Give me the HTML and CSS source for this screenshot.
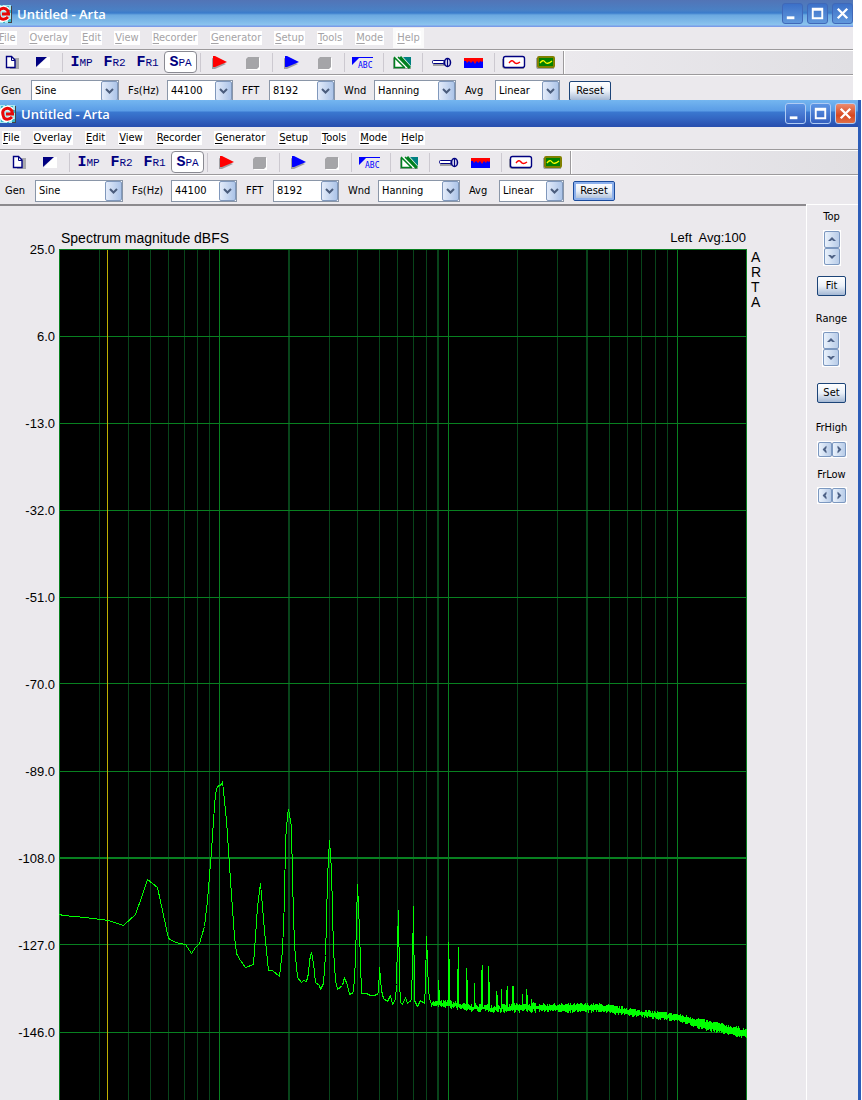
FILE: index.html
```html
<!DOCTYPE html>
<html lang="en">
<head>
<meta charset="utf-8">
<title>Untitled - Arta</title>
<link rel="stylesheet" href="styles.css">
</head>
<body>
<svg class="defs" aria-hidden="true">
  <symbol id="app" viewBox="0 0 16 18"><path fill="#a8e8f0" d="M0 0h15v18H0z"/><path fill="#38b8c8" d="M1 1h2v2H1zM5 0h2v2H5zM10 1h3v2h-3zM13 5h2v3h-2zM12 14h3v3h-3zM1 15h3v2H1zM7 15h2v3H7z"/><path fill="#444" d="M15 1h1v17h-1zM12 17h4v1h-4z"/><path fill="none" stroke="#fff" stroke-width="5" d="M12 5Q7 1 3 5T4 14Q8 16 12 12"/><path fill="none" stroke="#e80808" stroke-width="3" d="M12 6Q9 2 5 4T4 13Q8 16 12 12M6 9h8M12 5v4"/></symbol>
  <symbol id="new" viewBox="0 0 33 23"><path fill="#a8a8ac" d="M17 7h9v11h-9z"/><path fill="#fff" stroke="#000080" stroke-width="1.4" d="M13.500 5.500h5l3.500 3.500v7.500h-8.500z"/><path fill="none" stroke="#000080" d="M18.500 5.500v4h3.500"/></symbol>
  <symbol id="invert" viewBox="0 0 33 23"><path fill="#fff" d="M20 6h4v11H11z"/><path fill="#000080" d="M10 6h11L10 16z"/></symbol>
  <symbol id="play" viewBox="0 0 33 23"><path fill="#a0a0a4" d="M9 7v11h3l11-5z"/><path fill="currentColor" d="M10 5v11h2l12-5-12-6z"/></symbol>
  <symbol id="stop" viewBox="0 0 33 23"><path fill="#fff" d="M13 7h11v12H11z"/><path fill="#a5a5a8" d="M12 6h11v10l-2 2H10V8z"/></symbol>
  <symbol id="hatch" viewBox="0 0 33 23"><path fill="#a0a0a4" d="M7 7h2v9h16v2H7z"/><path fill="#fff" d="M8 6h17v11H8z"/><path fill="none" stroke="#008020" stroke-width="1.500" d="M8.500 6v10.500H19M8 6l11 11M12 6l11 11"/><path fill="#008080" d="M17 6h8v9z"/><path stroke="#008020" stroke-width="3" d="m14 6 10 11"/></symbol>
  <symbol id="key" viewBox="0 0 33 23"><path fill="#a0a0a4" d="M8 13h13v2H8z"/><rect x="7.500" y="9.500" width="12" height="3" rx="1" fill="#fff" stroke="#000080"/><ellipse cx="22.500" cy="11.500" rx="3" ry="4" fill="#d0d0e8" stroke="#000080" stroke-width="1.500"/><path stroke="#000080" d="M22.500 7v9M19 9v5"/></symbol>
  <symbol id="wave" viewBox="0 0 33 23"><path fill="red" d="M6 7h19v6H6z"/><path fill="#00f" d="M6 10l2 0 1 2 2-2 2 2 2-2 2 3 2-3 2 2 1-2 2 1 1-1v7H6z"/></symbol>
  <symbol id="sine" viewBox="0 0 33 23"><path fill="#a0a0a4" d="M5 8h2v8h20v2H7l-2-2z"/><rect x="6.500" y="5.500" width="21" height="11" rx="2" fill="#fff" stroke="#000080" stroke-width="1.400"/><path fill="none" stroke="red" stroke-width="1.400" d="M12 12q3-4 5-1t6 0"/></symbol>
  <symbol id="scope" viewBox="0 0 33 23"><path fill="#a0a0a4" d="M6 7h2v9h16v2H7l-1-2z"/><rect x="8" y="6" width="16" height="10" rx="1" fill="#008000" stroke="#808000" stroke-width="2"/><path fill="none" stroke="#ff0" stroke-width="1.300" d="M10 12q3-4 5-1t7-1"/></symbol>
  <symbol id="drop" viewBox="0 0 9 7"><path fill="none" stroke="#4a5c7c" stroke-width="2" d="m1 1.500 3.500 3.500L8 1.500"/></symbol>
  <symbol id="up" viewBox="0 0 8 5"><path fill="#4d6185" d="M4 0l4 4H5.500L4 3 2.500 4H0z"/></symbol>
  <symbol id="min" viewBox="0 0 20 20"><path fill="#fff" d="M4 13h8v3H4z"/></symbol>
  <symbol id="max" viewBox="0 0 20 20"><path fill="#fff" fill-rule="evenodd" d="M4 4h12v12H4zM6 7v7h8V7z"/></symbol>
  <symbol id="close" viewBox="0 0 20 20"><path stroke="#fff" stroke-width="2.500" d="m5 5 10 10M15 5 5 15"/></symbol>
</svg>

<section class="window back" aria-label="Background window">
  <header class="titlebar"><svg class="app-icon"><use href="#app"/></svg><h1 class="title">Untitled - Arta</h1>
    <button class="caption" aria-label="Minimize"><svg><use href="#min"/></svg></button><button class="caption" aria-label="Maximize"><svg><use href="#max"/></svg></button><button class="caption" aria-label="Close"><svg><use href="#close"/></svg></button></header>
  <nav class="menu"><button><u>F</u>ile</button><button><u>O</u>verlay</button><button><u>E</u>dit</button><button><u>V</u>iew</button><button><u>R</u>ecorder</button><button><u>G</u>enerator</button><button><u>S</u>etup</button><button><u>T</u>ools</button><button><u>M</u>ode</button><button class="lit"><u>H</u>elp</button></nav>
  <div class="toolbar">
    <div class="tools">
      <button aria-label="New"><svg><use href="#new"/></svg></button><button aria-label="Invert"><svg><use href="#invert"/></svg></button><i class="sep"></i>
      <button class="mode">I<small>MP</small></button><button class="mode">F<small>R2</small></button><button class="mode">F<small>R1</small></button><button class="mode active">S<small>PA</small></button><i class="sep"></i>
      <button class="red" aria-label="Record"><svg><use href="#play"/></svg></button><button aria-label="Stop recording"><svg><use href="#stop"/></svg></button><i class="sep"></i>
      <button class="blue" aria-label="Generate"><svg><use href="#play"/></svg></button><button aria-label="Stop generator"><svg><use href="#stop"/></svg></button><i class="sep"></i>
      <button aria-label="Labels"><svg viewBox="0 0 33 23"><path fill="#00f" d="M5 6h21v1H12L5 14z"/><text x="11" y="17" class="abc-text">ABC</text></svg></button><i class="sep"></i>
      <button aria-label="Colors"><svg><use href="#hatch"/></svg></button><i class="sep"></i>
      <button aria-label="Calibrate"><svg><use href="#key"/></svg></button><button aria-label="Spectrum"><svg><use href="#wave"/></svg></button><i class="sep"></i>
      <button aria-label="Signal"><svg><use href="#sine"/></svg></button><button aria-label="Scope"><svg><use href="#scope"/></svg></button>
    </div><div class="rest"></div>
  </div>
  <div class="options">
    <label for="b-gen">Gen</label><span class="combo"><select id="b-gen"><option>Sine</option></select><svg><use href="#drop"/></svg></span>
    <label for="b-fs">Fs(Hz)</label><span class="combo"><select id="b-fs"><option>44100</option></select><svg><use href="#drop"/></svg></span>
    <label for="b-fft">FFT</label><span class="combo"><select id="b-fft"><option>8192</option></select><svg><use href="#drop"/></svg></span>
    <label for="b-wnd">Wnd</label><span class="combo"><select id="b-wnd"><option>Hanning</option></select><svg><use href="#drop"/></svg></span>
    <label for="b-avg">Avg</label><span class="combo"><select id="b-avg"><option>Linear</option></select><svg><use href="#drop"/></svg></span>
    <button class="push">Reset</button>
  </div>
</section>

<main class="window front">
  <header class="titlebar"><svg class="app-icon"><use href="#app"/></svg><h1 class="title">Untitled - Arta</h1>
    <button class="caption" aria-label="Minimize"><svg><use href="#min"/></svg></button><button class="caption" aria-label="Maximize"><svg><use href="#max"/></svg></button><button class="caption exit" aria-label="Close"><svg><use href="#close"/></svg></button></header>
  <nav class="menu"><button><u>F</u>ile</button><button><u>O</u>verlay</button><button><u>E</u>dit</button><button><u>V</u>iew</button><button><u>R</u>ecorder</button><button><u>G</u>enerator</button><button><u>S</u>etup</button><button><u>T</u>ools</button><button><u>M</u>ode</button><button><u>H</u>elp</button></nav>
  <div class="toolbar">
    <div class="tools">
      <button aria-label="New"><svg><use href="#new"/></svg></button><button aria-label="Invert"><svg><use href="#invert"/></svg></button><i class="sep"></i>
      <button class="mode">I<small>MP</small></button><button class="mode">F<small>R2</small></button><button class="mode">F<small>R1</small></button><button class="mode active">S<small>PA</small></button><i class="sep"></i>
      <button class="red" aria-label="Record"><svg><use href="#play"/></svg></button><button aria-label="Stop recording"><svg><use href="#stop"/></svg></button><i class="sep"></i>
      <button class="blue" aria-label="Generate"><svg><use href="#play"/></svg></button><button aria-label="Stop generator"><svg><use href="#stop"/></svg></button><i class="sep"></i>
      <button aria-label="Labels"><svg viewBox="0 0 33 23"><path fill="#00f" d="M5 6h21v1H12L5 14z"/><text x="11" y="17" class="abc-text">ABC</text></svg></button><i class="sep"></i>
      <button aria-label="Colors"><svg><use href="#hatch"/></svg></button><i class="sep"></i>
      <button aria-label="Calibrate"><svg><use href="#key"/></svg></button><button aria-label="Spectrum"><svg><use href="#wave"/></svg></button><i class="sep"></i>
      <button aria-label="Signal"><svg><use href="#sine"/></svg></button><button aria-label="Scope"><svg><use href="#scope"/></svg></button>
    </div><div class="rest"></div>
  </div>
  <div class="options">
    <label for="gen">Gen</label><span class="combo"><select id="gen"><option>Sine</option></select><svg><use href="#drop"/></svg></span>
    <label for="fs">Fs(Hz)</label><span class="combo"><select id="fs"><option>44100</option></select><svg><use href="#drop"/></svg></span>
    <label for="fft">FFT</label><span class="combo"><select id="fft"><option>8192</option></select><svg><use href="#drop"/></svg></span>
    <label for="wnd">Wnd</label><span class="combo"><select id="wnd"><option>Hanning</option></select><svg><use href="#drop"/></svg></span>
    <label for="avg">Avg</label><span class="combo"><select id="avg"><option>Linear</option></select><svg><use href="#drop"/></svg></span>
    <button class="push focus">Reset</button>
  </div>
  <div class="workspace">
    <section class="graph">
      <div class="heading"><span>Spectrum magnitude dBFS</span><span class="status">Left&nbsp; Avg:100</span></div>
      <div class="axis"><span>25.0</span><span>6.0</span><span>-13.0</span><span>-32.0</span><span>-51.0</span><span>-70.0</span><span>-89.0</span><span>-108.0</span><span>-127.0</span><span>-146.0</span></div>
      <svg class="plot" viewBox="59 249 688 851" preserveAspectRatio="none" role="img" aria-label="Spectrum magnitude">
        <path class="dim" d="M99.500 249v851M128.500 249v851M150.500 249v851M168.500 249v851M184.500 249v851M197.500 249v851M209.500 249v851M329.500 249v851M357.500 249v851M379.500 249v851M397.500 249v851M413.500 249v851M426.500 249v851M517.500 249v851M557.500 249v851M609.500 249v851M627.500 249v851M641.500 249v851M655.500 249v851M667.500 249v851"/>
        <path class="dim thick" d="M289 249v851M438 249v851M587 249v851"/>
        <path class="grid" d="M59.500 249v851M219.500 249v851M448.500 249v851M677.500 249v851M746.500 249v851M59 249.500h688M59 336.500h688M59 423.500h688M59 510.500h688M59 597.500h688M59 683.500h688M59 771.500h688M59 944.500h688M59 1032.500h688"/>
        <path class="grid thick" d="M59 858h688"/>
        <path class="cursor" d="M107.500 250v850"/>
        <path class="trace" id="trace"/>
      </svg>
      <div class="brand"><span>A</span><span>R</span><span>T</span><span>A</span></div>
    </section>
    <aside class="side">
      <div class="control"><span>Top</span><div class="spin"><button aria-label="Top up"><svg><use href="#up"/></svg></button><button aria-label="Top down"><svg class="down"><use href="#up"/></svg></button></div></div>
      <button class="push">Fit</button>
      <div class="control range"><span>Range</span><div class="spin"><button aria-label="Range up"><svg><use href="#up"/></svg></button><button aria-label="Range down"><svg class="down"><use href="#up"/></svg></button></div></div>
      <button class="push">Set</button>
      <div class="control freq"><span>FrHigh</span><div class="spin flat"><button aria-label="High left"><svg class="left"><use href="#up"/></svg></button><button aria-label="High right"><svg class="right"><use href="#up"/></svg></button></div></div>
      <div class="control low"><span>FrLow</span><div class="spin flat"><button aria-label="Low left"><svg class="left"><use href="#up"/></svg></button><button aria-label="Low right"><svg class="right"><use href="#up"/></svg></button></div></div>
    </aside>
  </div>
</main>
<script src="script.js"></script>
</body>
</html>
```
FILE: styles.css
```css
* { box-sizing: border-box; }
body { margin: 0; background: #fff; font: 11px/14px "DejaVu Sans Condensed", "DejaVu Sans", sans-serif; color: #000; overflow-x: hidden; }
button { margin: 0; padding: 0; border: 0; background: none; color: inherit; font: inherit; }
.defs { position: absolute; width: 0; height: 0; }
.window { background: #ebe9ed; overflow: hidden; }
.back { height: 100px; margin-right: 9px; }
.front { margin-right: 1px; border-right: 3px solid #2c5cb8; }

.titlebar { display: flex; align-items: center; gap: 4px; height: 27px; padding-right: 2px; }
.front .titlebar { background: linear-gradient(#74b6f0 0, #5a9ce6 11px, #3a78d0 12px, #3468c4 18px, #2850b0 26px); }
.back .titlebar { padding-right: 0; background: linear-gradient(#5274b6 0, #4a80c4 10px, #3a7ccc 13px, #6aa8e0 15px, #8cc4ee 25px, #7a9ce8 26px); }
.app-icon { width: 16px; height: 18px; }
.back .app-icon { margin-left: -4px; }
.title { flex: 1; margin: 0; padding-left: 1px; color: #fff; font: 600 13px/18px "Open Sans", sans-serif; }
.caption { width: 21px; height: 21px; padding: 0; border: 1px solid #b0ccf4; border-radius: 3px; background: linear-gradient(#5c94e4, #3460c0); }
.back .caption { border-color: #4068b8; background: linear-gradient(#3c70c8, #6098dc); }
.front .exit { background: linear-gradient(#ec8c70, #d84820 60%, #e07048); }
.caption svg { display: block; width: 19px; height: 19px; }

.menu { display: flex; align-items: center; gap: 12px; height: 22px; padding-left: 2px; }
.menu button { padding: 0 1px; background: #fff; line-height: 14px; }
.back .menu { margin-left: -4px; color: #a5a3a6; }
.back .menu .lit { outline: 3px solid #fafafa; }
.menu u { text-underline-offset: 2px; }

.toolbar { display: flex; border-top: 1px solid #9c9a9c; box-shadow: inset 0 1px #fff; padding-top: 1px; }
.back .toolbar { margin-left: -7px; }
.tools { display: flex; height: 23px; border-right: 1px solid #9c9a9c; }
.tools button { width: 33px; height: 23px; }
.tools svg { display: block; width: 33px; height: 23px; }
.rest { flex: 1; border-left: 1px solid #fff; background: linear-gradient(90deg, #ebe9ed, #e0dfe3); }
.sep { width: 3px; margin: 2px 0 2px 3px; border-left: 1px solid #ccc9d0; }
.tools .mode { color: #000080; font: bold 15px/21px "Liberation Mono", monospace; white-space: nowrap; }
.mode small { font: 11px/21px "Liberation Mono", monospace; }
.tools .active { height: 22px; border: 1px solid #8a8a92; border-radius: 4px; background: #fff; }
.red { color: red; }
.blue { color: #00f; }
.abc-text { fill: #00f; font: 8px "DejaVu Sans Mono", monospace; }

.options { display: grid; grid-template-columns: 30px 88px 48px 66px 36px 66px 39px 82px 39px 65px 51px; align-items: center; height: 30px; padding: 3px 0 0 5px; border-top: 1px solid #9c9a9c; box-shadow: inset 0 1px #fff; }
.back .options { margin-left: -4px; }
.options label { padding-left: 9px; }
.options label:first-child { padding-left: 0; }
.options .push { margin-left: 9px; width: 42px; }
.combo { position: relative; height: 22px; border: 1px solid #8a96a8; background: #fff; }
.combo select { width: 100%; height: 20px; padding: 0 20px 0 3px; border: 0; background: none; color: #000; font: inherit; appearance: none; }
.combo svg { position: absolute; top: 0; right: 0; width: 17px; height: 20px; padding: 5px 3px; border: 1px solid #8098bc; border-radius: 2px; background: linear-gradient(90deg, #e4ecfa, #acc4e8); pointer-events: none; }
.push { height: 20px; border: 1px solid #1c4478; border-radius: 2px; background: linear-gradient(#fff, #eaf0f8 50%, #a4b8d4); line-height: 16px; }
.push.focus { border-color: #1c4c9c; box-shadow: inset 0 0 0 2px #8cb0ec; }

.workspace { display: flex; min-height: 896px; }
.graph { flex: 1; display: grid; grid-template: 43px 851px / 59px 1fr 59px; border-top: 2px solid #8c8a8e; font-family: "Liberation Sans", sans-serif; }
.heading { grid-column: 2; display: flex; justify-content: space-between; align-items: flex-end; padding: 0 1px 3px 2px; font-size: 14px; line-height: 16px; }
.status { font-size: 13px; }
.axis { grid-column: 1; display: grid; grid-auto-rows: 87px; text-align: right; padding-right: 4px; font-size: 13px; line-height: 14px; overflow: visible; height: 851px; }
.axis span { margin-top: -6px; }
.plot { width: 100%; height: 851px; background: #000; shape-rendering: crispEdges; }
.plot path { fill: none; vector-effect: non-scaling-stroke; }
.dim { stroke: #08441a; }
.grid { stroke: #088020; }
.thick { stroke-width: 2; }
.cursor { stroke: #c0b000; }
.trace { stroke: #0f0; stroke-linejoin: bevel; }
.brand { display: flex; flex-direction: column; padding: 1px 0 0 4px; font-size: 14px; line-height: 15px; }

.side { width: 52px; display: flex; flex-direction: column; align-items: center; border-left: 1px solid #fff; border-top: 1px solid #fff; padding: 5px 2px 0 0; }
.side .push { width: 29px; }
.control { display: flex; flex-direction: column; align-items: center; gap: 6px; height: 66px; }
.range { margin-top: 16px; height: 71px; gap: 5px; }
.freq { margin-top: 18px; height: 47px; }
.low { gap: 5px; }
.spin { display: flex; flex-direction: column; border: 1px solid #fff; }
.spin button { display: grid; place-items: center; width: 16px; height: 17px; border: 1px solid #7c98c0; border-radius: 2px; background: linear-gradient(90deg, #eaf2fc, #b8cce8); }
.spin svg { width: 8px; height: 5px; }
.flat { flex-direction: row; }
.flat button { width: 14px; height: 15px; }
.down { transform: rotate(180deg); }
.left { transform: rotate(-90deg); }
.right { transform: rotate(90deg); }
```
FILE: script.js
```js
// Low-frequency part of the spectrum: measured points.
const points = [
  [59,914],[63,915],[73,916],[85,917],[100,919],[108,920],[123,925],[135,914],[141,897],[147,879],[157,887],[162,910],[168,938],[175,942],[185,944],[191,953],[195,947],[199,943],[204,926],[207,900],[211,850],[213,820],[215,793],[217,786],[221,784],[222,781],[226,820],[230,880],[234,936],[236,953],[240,960],[245,967],[253,964],[257,907],[260,883],[264,930],[268,970],[272,970],[279,976],[282,950],[284,900],[285,840],[287,815],[288,809],[291,826],[292,880],[294,945],[297,977],[301,982],[303,980],[306,981],[308,973],[309,960],[311,952],[313,963],[315,982],[319,985],[320,989],[323,983],[325,955],[326,922],[327,877],[329,840],[331,870],[333,950],[335,980],[337,989],[342,985],[344,977],[347,985],[349,994],[353,992],[355,960],[356,920],[357,884],[359,930],[361,993],[366,993],[370,995],[374,995],[378,993],[379,967],[381,990],[383,998],[387,1001],[390,995],[392,1004],[395,999],[396,984],[397,941],[398,910],[399,980],[400,1002],[402,1004],[405,997],[407,1003],[409,1001],[411,1000],[412,960],[413,906],[414,1000],[417,1006],[420,1000],[424,1003],[425,984],[426,936],[428,990],[430,1003]
];
let d = "M" + points.map(([x, y]) => `${x + 0.5} ${y + 0.5}`).join("L");

// Harmonics above the noise floor: column -> peak level.
const peaks = {438:980,439:990,448:942,449:959,457:969,458:947,466:968,467:980,474:983,481:970,482:965,488:966,489:982,496:991,497:995,501:989,506:990,507:986,512:986,513:986,522:994,526:989,527:995,531:999};
// Noise band: column, upper edge, lower edge, spread of both edges.
const band = [[430,1003,1005,3],[448,1003,1006,3],[465,1007,1009,4],[500,1008,1010,4],[535,1006,1010,4],[570,1006,1011,3],[600,1006,1011,3],[640,1012,1016,3],[677,1016,1020,3],[700,1021,1028,3],[746,1031,1037,3]];
let seed = 7;
const random = () => (seed = (seed * 16807) % 2147483647) / 2147483647;
for (let x = 431; x < 747; x++) {
  let i = 1;
  while (i < band.length - 1 && x > band[i][0]) i++;
  const a = band[i - 1], b = band[i], t = (x - a[0]) / (b[0] - a[0]);
  const top = Math.round(a[1] + (b[1] - a[1]) * t - random() * b[3]);
  const bottom = Math.round(a[2] + (b[2] - a[2]) * t + random() * b[3] - 1);
  d += `M${x + 0.5} ${peaks[x] || top}V${bottom}`;
}
document.getElementById("trace").setAttribute("d", d);
```
